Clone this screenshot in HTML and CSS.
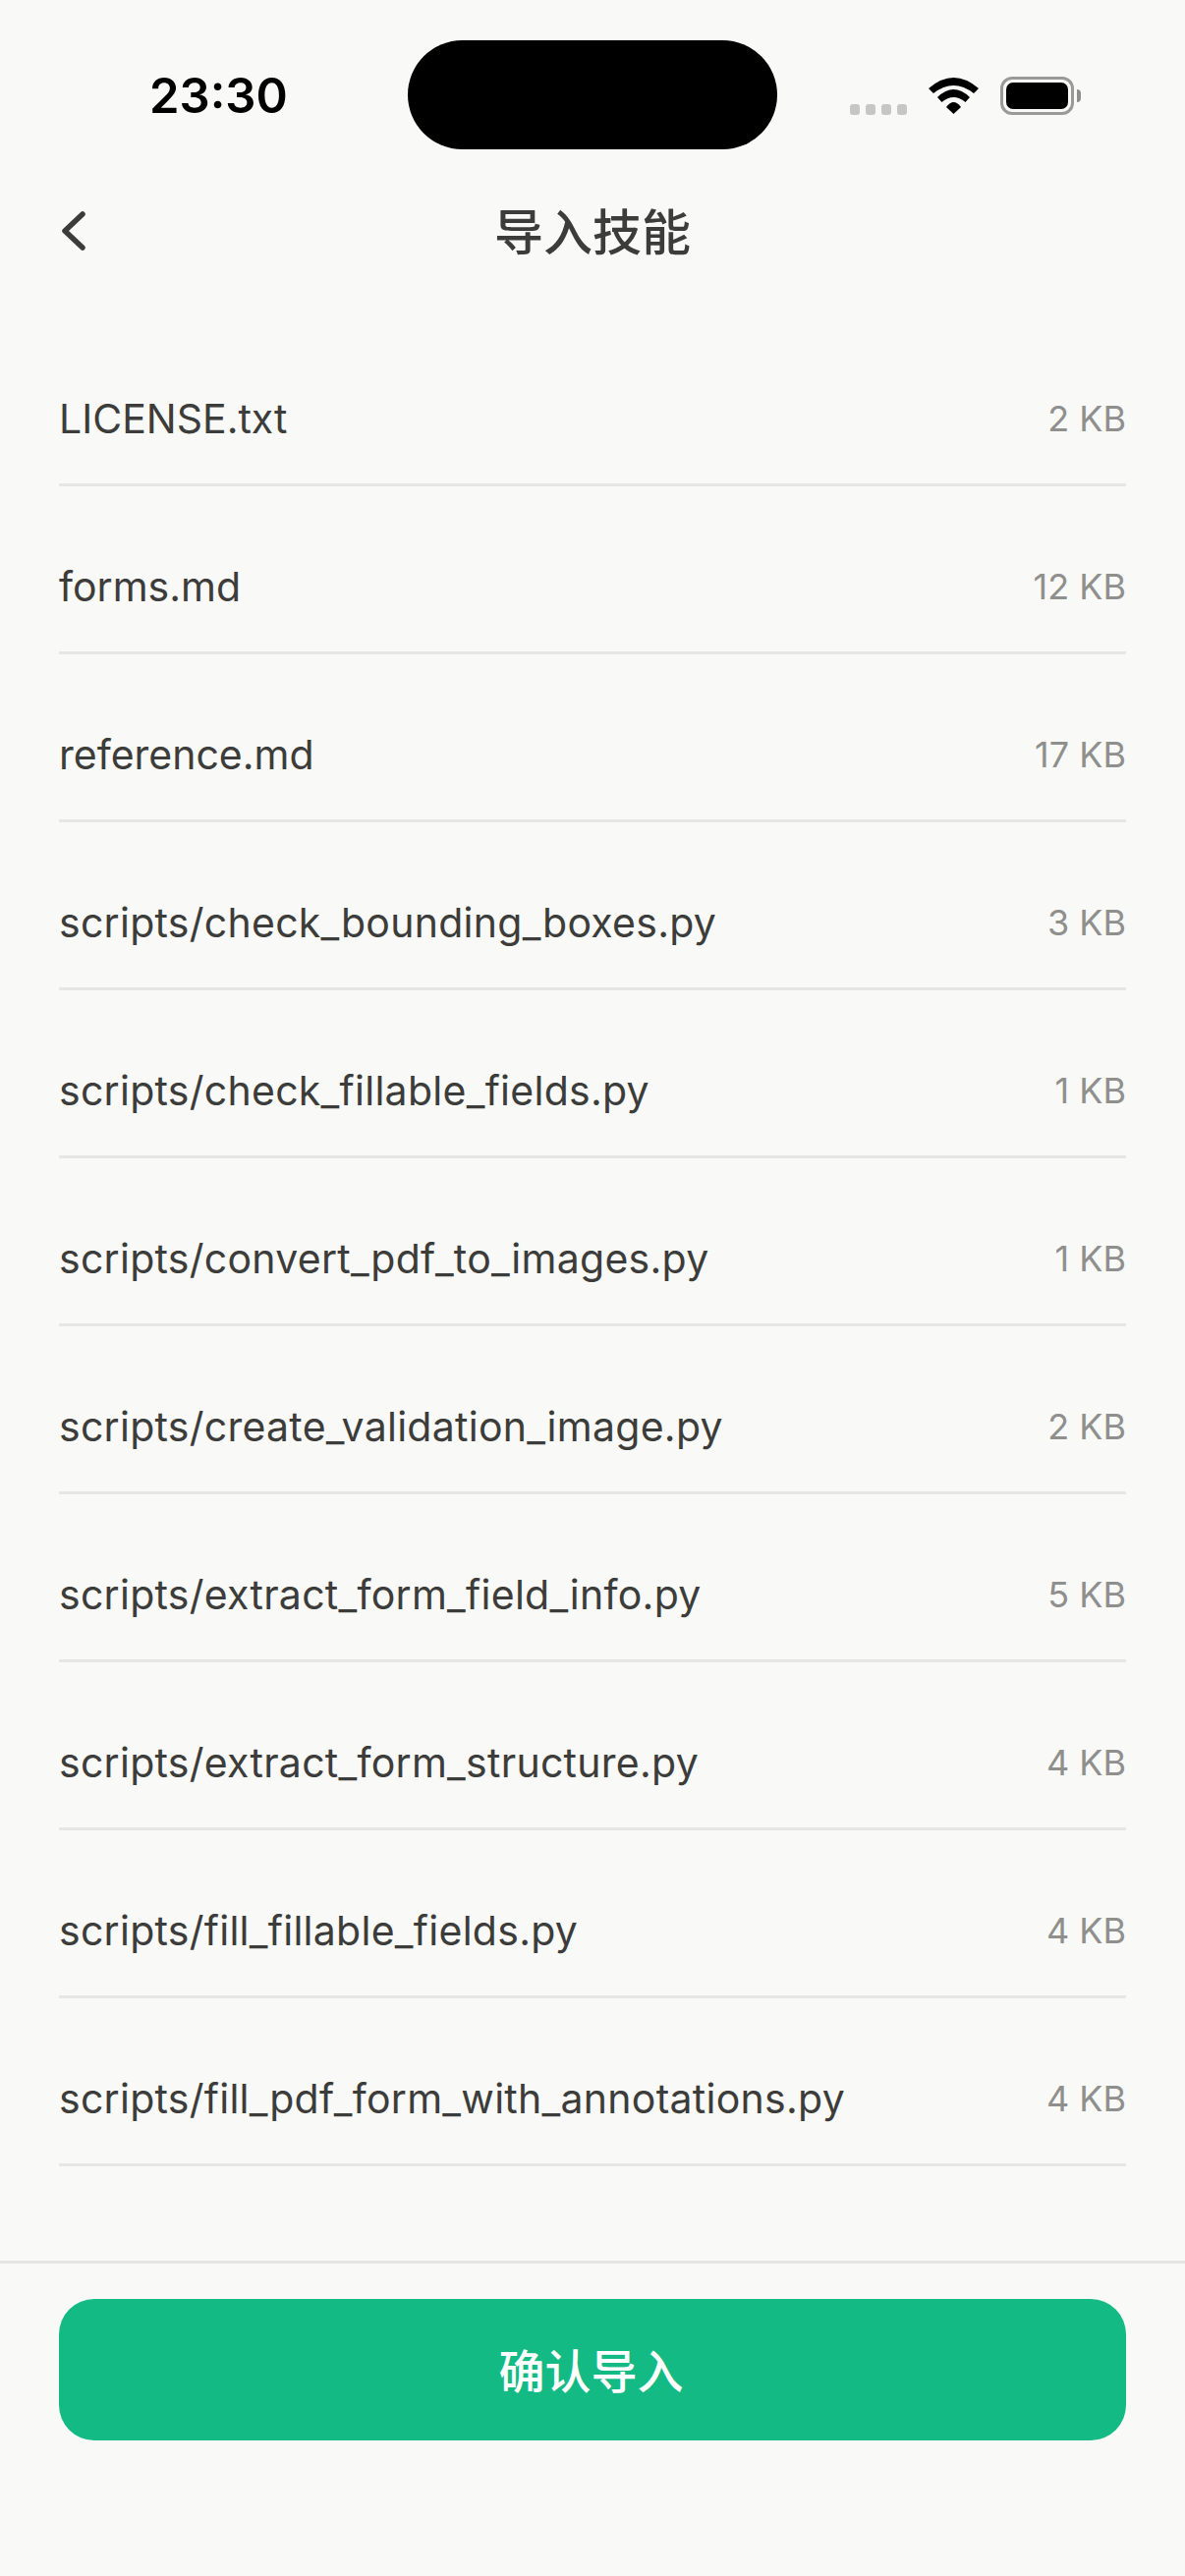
FILE: index.html
```html
<!DOCTYPE html>
<html lang="zh-CN">
<head>
	<meta charset="UTF-8">
	<title>导入技能</title>
	<link rel="stylesheet" href="styles.css">
</head>
<body>
	<div class="page">
		<div class="status">
			<span class="time">23:30</span>
			<div class="island"></div>
			<div class="icons">
				<div class="dots"><i></i><i></i><i></i><i></i></div>
				<svg class="wifi" width="51" height="37" viewBox="0 0 51 37">
					<path d="M0 11Q25.500 -11 51 11L46 16Q25.500 0 5 16Z"/>
					<path d="M9 20Q25.500 4 42 20L37.500 25Q25.500 15 13.500 25Z"/>
					<path d="M18 30Q25.500 20 33 30L25.500 37Z"/>
				</svg>
				<div class="battery"><div class="level"></div></div>
				<div class="nub"></div>
			</div>
		</div>

		<div class="head">
			<svg class="back" width="30" height="44" viewBox="0 0 30 44">
				<path d="M25 5L7 22L25 39" />
			</svg>
			<span class="title">导入技能</span>
		</div>

		<div class="list">
			<div class="row"><span>LICENSE.txt</span><span class="size">2 KB</span></div>
			<div class="row"><span>forms.md</span><span class="size">12 KB</span></div>
			<div class="row"><span>reference.md</span><span class="size">17 KB</span></div>
			<div class="row"><span class="path">scripts/check_bounding_boxes.py</span><span class="size">3 KB</span></div>
			<div class="row"><span class="path">scripts/check_fillable_fields.py</span><span class="size">1 KB</span></div>
			<div class="row"><span class="path">scripts/convert_pdf_to_images.py</span><span class="size">1 KB</span></div>
			<div class="row"><span class="path">scripts/create_validation_image.py</span><span class="size">2 KB</span></div>
			<div class="row"><span class="path">scripts/extract_form_field_info.py</span><span class="size">5 KB</span></div>
			<div class="row"><span class="path">scripts/extract_form_structure.py</span><span class="size">4 KB</span></div>
			<div class="row"><span class="path">scripts/fill_fillable_fields.py</span><span class="size">4 KB</span></div>
			<div class="row"><span class="path">scripts/fill_pdf_form_with_annotations.py</span><span class="size">4 KB</span></div>
		</div>

		<div class="foot">
			<div class="btn">确认导入</div>
		</div>
	</div>
</body>
</html>
```

FILE: styles.css
```css
* {
	margin: 0;
	padding: 0;
	box-sizing: border-box;
}

body {
	background: #f9f9f7;
	font-family: "Inter", "Noto Sans CJK SC", sans-serif;
	color: #3c3c3a;
}

.page {
	width: 1206px;
	height: 2622px;
	display: flex;
	flex-direction: column;
	overflow: hidden;
}

/* status bar */
.status {
	display: grid;
	grid-template-columns: 415px 376px 1fr;
	padding-top: 41px;
	height: 152px;
}

.time {
	padding-left: 152px;
	font-family: "Inter", sans-serif;
	font-size: 49px;
	font-weight: 600;
	line-height: 113px;
	color: #000;
}

.island {
	height: 111px;
	border-radius: 56px;
	background: #000;
}

.icons {
	display: flex;
	padding: 37px 0 0 74px;
	height: 111px;
}

.dots {
	display: flex;
	gap: 6px;
	margin-top: 28px;
}

.dots i {
	width: 10px;
	height: 11px;
	border-radius: 3px;
	background: #c6c6c6;
}

.wifi {
	margin: 1px 0 0 22px;
}

.wifi path {
	fill: #000;
}

.battery {
	width: 75px;
	height: 39px;
	margin-left: 22px;
	padding: 3px;
	border: 3px solid #9a9a9a;
	border-radius: 12px;
}

.level {
	height: 100%;
	border-radius: 7px;
	background: #000;
}

.nub {
	width: 4px;
	height: 13px;
	margin: 13px 0 0 3px;
	border-radius: 0 7px 7px 0;
	background: #8e8e8e;
}

/* title bar */
.head {
	position: relative;
	height: 130px;
	margin-top: 18px;
	display: flex;
	align-items: center;
	justify-content: center;
}

.back {
	position: absolute;
	left: 59px;
	top: 43px;
}

.back path {
	fill: none;
	stroke: #3c3c3a;
	stroke-width: 5.500;
	stroke-linecap: round;
	stroke-linejoin: round;
}

.title {
	font-size: 50px;
	font-weight: 500;
	margin-top: -5px;
}

/* file list */
.list {
	flex: 1;
	padding: 24px 60px 0;
}

.row {
	height: 171px;
	padding-top: 36px;
	display: flex;
	align-items: center;
	justify-content: space-between;
	border-bottom: 3px solid #e6e6e6;
	font-size: 41px;
}

.path {
	letter-spacing: 0.27px;
}

.size {
	font-size: 36px;
	color: #8f8f8d;
}

.foot {
	height: 321px;
	padding: 36px 60px 0;
	border-top: 3px solid #e6e6e6;
}

.btn {
	height: 144px;
	padding-right: 3px;
	border-radius: 36px;
	background: #13ba83;
	color: #fff;
	font-size: 47px;
	font-weight: 500;
	line-height: 147px;
	text-align: center;
}
```
